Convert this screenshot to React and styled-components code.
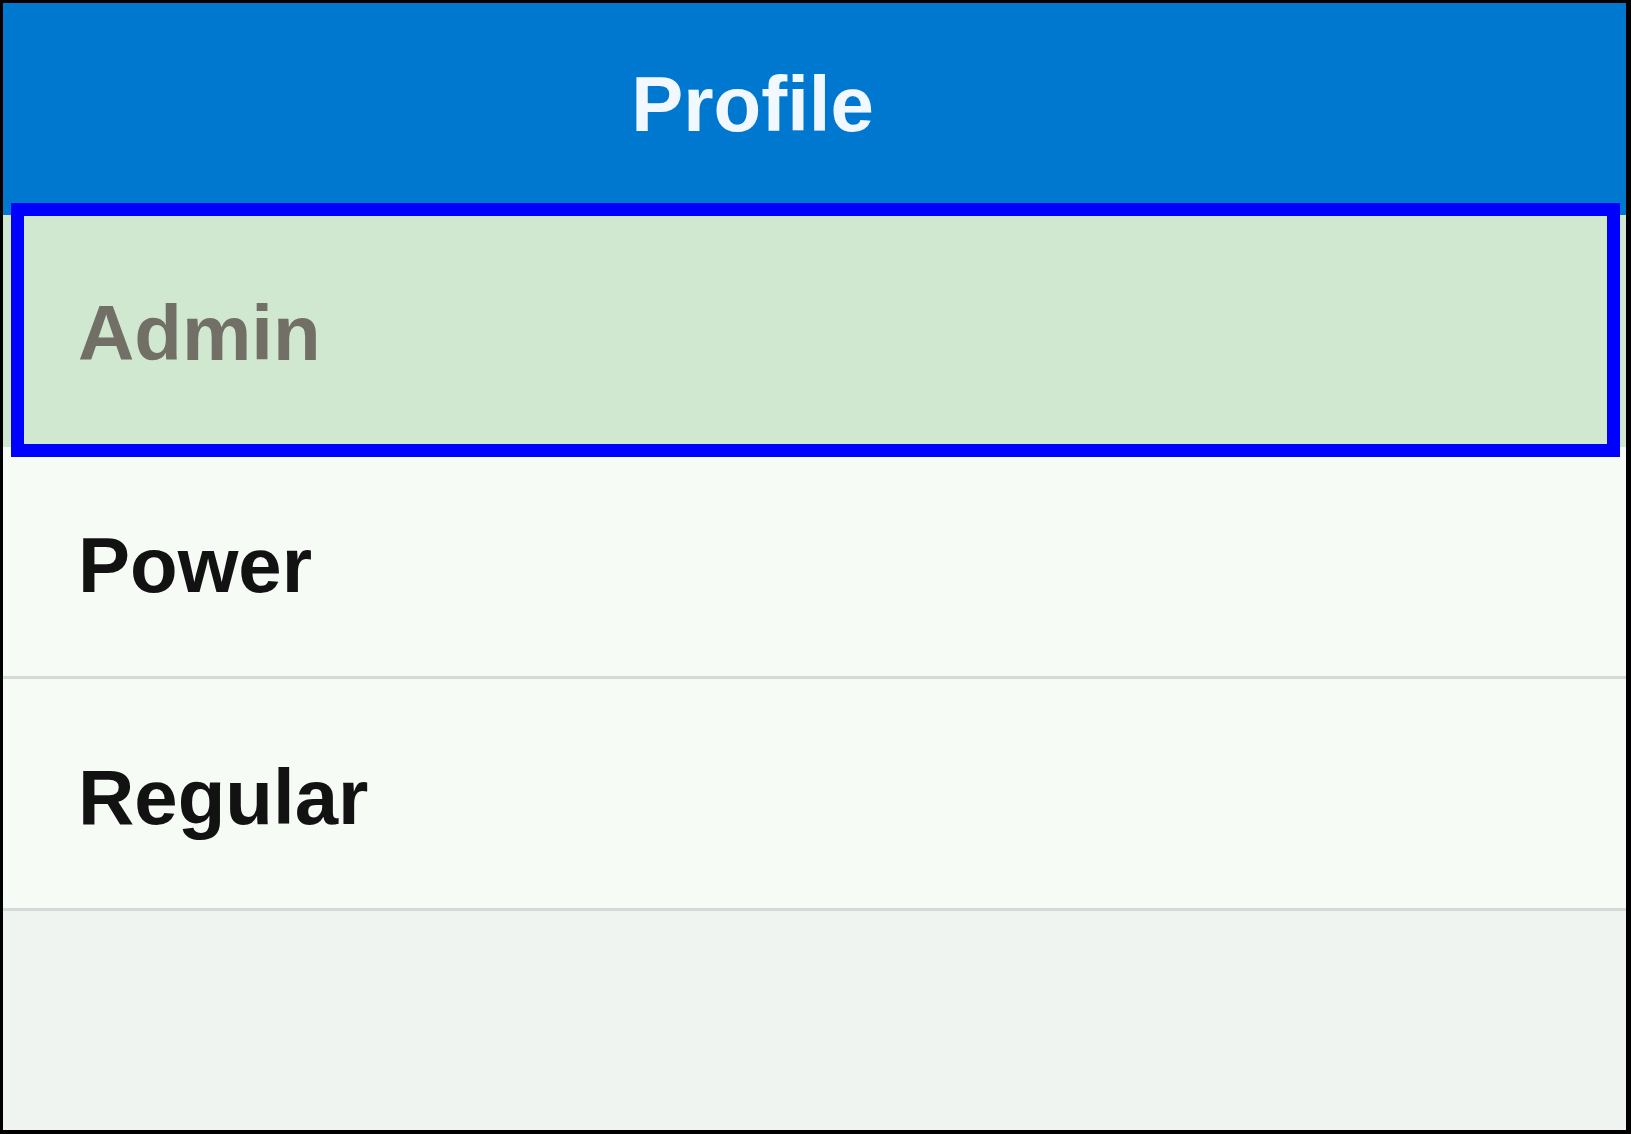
import React from 'react';
import styled, { createGlobalStyle } from 'styled-components';

const GlobalStyle = createGlobalStyle`
  html, body {
    margin: 0;
    padding: 0;
    background: #ffffff;
  }
  * {
    box-sizing: border-box;
  }
`;

const Frame = styled.div`
  width: 1631px;
  height: 1134px;
  border: 3px solid #000;
  border-right-width: 5px;
  border-bottom-width: 4px;
  background-color: #f0f4f0;
  display: flex;
  flex-direction: column;
  font-family: "Liberation Sans", Arial, sans-serif;
  font-weight: 700;
  font-size: 78px;
`;

const Header = styled.div`
  height: 212px;
  flex-shrink: 0;
  background-color: #0078d0;
  color: #f2f8ff;
  display: flex;
  align-items: center;
  justify-content: center;
  padding: 0 124px 10px 0;
`;

const List = styled.ul`
  list-style: none;
  margin: 0;
  padding: 0;
`;

const Row = styled.li`
  position: relative;
  height: 232px;
  display: flex;
  align-items: center;
  padding: 8px 0 0 75px;
  border-bottom: 3px solid ${(p) => (p.selected ? '#d0e8d0' : '#d8d8d8')};
  background-color: ${(p) => (p.selected ? '#d0e8d0' : '#f6fbf6')};
  color: ${(p) => (p.selected ? '#716f66' : '#121212')};

  ${(p) =>
    p.selected &&
    `
    &::after {
      content: '';
      position: absolute;
      z-index: 2;
      top: -12px;
      bottom: -13px;
      left: 8px;
      right: 6px;
      border: 13px solid #0000ff;
      pointer-events: none;
    }
  `}
`;

const profiles = ['Admin', 'Power', 'Regular'];

const App = () => {
  return (
    <>
      <GlobalStyle />
      <Frame>
        <Header>Profile</Header>
        <List>
          {profiles.map((name, i) => (
            <Row key={name} selected={i === 0}>
              {name}
            </Row>
          ))}
        </List>
      </Frame>
    </>
  );
};

export default App;
